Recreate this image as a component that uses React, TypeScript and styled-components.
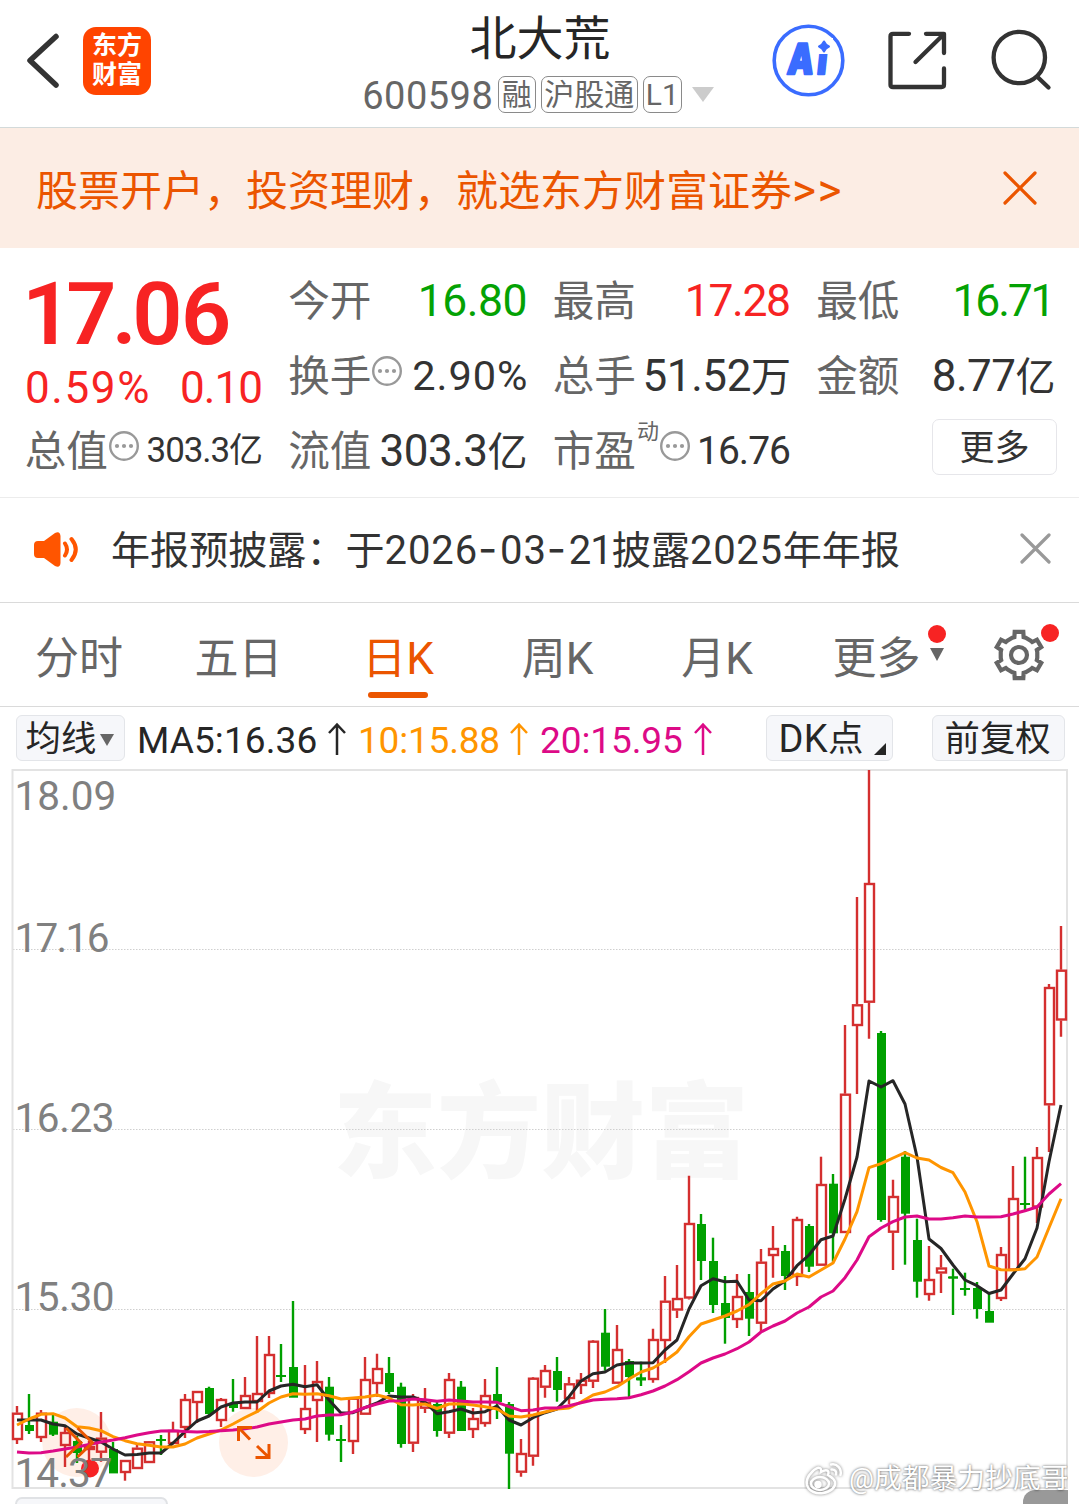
import React from 'react';
import styled, { createGlobalStyle } from 'styled-components';

const GlobalStyle = createGlobalStyle`
  * { box-sizing: border-box; }
  body {
    margin: 0;
    background: #fff;
    font-family: Roboto, "Noto Sans CJK SC", sans-serif;
    color: #333;
  }
`;

const C = {
  red: '#f72323',
  green: '#04a204',
  orange: '#eb5500',
  label: '#666',
  text: '#333',
  ink: '#262626',
};

const Screen = styled.div`
  width: 1079px;
  height: 1504px;
  overflow: hidden;
  position: relative;
  background: #fff;
  white-space: nowrap;
`;

const Txt = styled.span<{ $s: number; $c?: string; $ls?: number; $dy?: number }>`
  display: block;
  font-size: ${p => p.$s}px;
  line-height: 1.1;
  color: ${p => p.$c || C.text};
  letter-spacing: ${p => p.$ls || 0}px;
  margin-right: ${p => -(p.$ls || 0)}px;
  padding-top: ${p => p.$dy || 0}px;
`;

const Latin = styled.span<{ $s: number; $ls?: number }>`
  font-size: ${p => p.$s}px;
  letter-spacing: ${p => p.$ls || 0}px;
`;

/* ---------- header ---------- */
const Header = styled.header`
  height: 128px;
  border-bottom: 1px solid #d3dada;
  display: grid;
  grid-template-columns: 270px 1fr 310px;
`;
const HeaderLeft = styled.div`
  display: flex;
  align-items: center;
  height: 121px;
  padding-left: 24px;
  gap: 21px;
`;
const Logo = styled.div`
  width: 68px;
  height: 68px;
  border-radius: 13px;
  background: #ff4400;
  color: #fff;
  font-weight: 700;
  font-size: 25px;
  line-height: 29.5px;
  text-align: center;
  padding-top: 4px;
`;
const HeaderMid = styled.div`
  display: flex;
  flex-direction: column;
  align-items: center;
  padding-left: 40px;
`;
const Title = styled.div`
  font-size: 47px;
  line-height: 56px;
  color: ${C.ink};
  margin-top: 11px;
  margin-left: 1px;
`;
const SubTitle = styled.div`
  display: flex;
  align-items: center;
  height: 37px;
  margin-top: 9px;
  margin-right: 3px;
`;
const Tag = styled.span<{ $w: number }>`
  width: ${p => p.$w}px;
  height: 37px;
  border: 1px solid #8a8a8a;
  border-radius: 7px;
  font-size: 30px;
  line-height: 36px;
  color: ${C.label};
  display: flex;
  justify-content: center;
  margin-left: 5px;
`;
const TriDown = styled.i<{ $w: number; $h: number; $c: string; $ml?: number }>`
  width: 0;
  height: 0;
  margin-left: ${p => p.$ml || 0}px;
  border-left: ${p => p.$w / 2}px solid transparent;
  border-right: ${p => p.$w / 2}px solid transparent;
  border-top: ${p => p.$h}px solid ${p => p.$c};
`;
const HeaderRight = styled.div`
  display: flex;
  align-items: center;
  height: 121px;
`;

/* ---------- banner ---------- */
const Banner = styled.div`
  height: 120px;
  background: #fcede4;
  display: flex;
  align-items: center;
  justify-content: space-between;
  padding: 0 42px 0 36px;
`;

/* ---------- quote ---------- */
const Quote = styled.section`
  height: 250px;
  border-bottom: 1px solid #ececec;
  display: grid;
  grid-template-columns: 238px 239px 238px 239px;
  column-gap: 25.5px;
  padding: 15px 0 0 25px;
`;
const QCol = styled.div`
  display: flex;
  flex-direction: column;
`;
const Price = styled.div`
  height: 99px;
  line-height: 95px;
  padding-top: 3px;
  font-size: 88px;
  font-weight: 600;
  color: ${C.red};
  letter-spacing: -1.5px;
  margin-left: -3px;
`;
const Tight = styled.span<{ $ls: number }>`
  letter-spacing: ${p => p.$ls}px;
`;
const QRow = styled.div<{ $h?: number }>`
  height: ${p => p.$h || 75}px;
  display: flex;
  align-items: center;
  justify-content: space-between;
`;
const QLabel = styled.div`
  display: flex;
  align-items: center;
  font-size: 41.6px;
  line-height: 60px;
  margin-left: -0.3px;
  padding-top: 2px;
  color: ${C.label};
`;
const Sup = styled.span`
  font-size: 22px;
  line-height: 24px;
  margin: -40px 0 0 1px;
`;
const MoreBtn = styled.button`
  margin-left: auto;
  margin-right: -1.5px;
  margin-top: -7px;
  width: 125px;
  height: 56px;
  border: 1.5px solid #e6e6ea;
  border-radius: 7px;
  background: #fff;
  font: 400 35px/46px "Noto Sans CJK SC", sans-serif;
  color: ${C.text};
  padding: 0 0 4px;
`;

/* ---------- notice ---------- */
const Notice = styled.div`
  height: 105px;
  border-bottom: 1px solid #dadada;
  display: flex;
  align-items: center;
  padding: 0 28.5px 0 32px;
`;
const NoticeText = styled.div`
  flex: 1;
  margin-left: 31px;
  padding-top: 1px;
  font-size: 39.1px;
  line-height: 60px;
`;
const NoticeClose = styled.span`
  display: flex;
  margin-top: -3px;
`;
const Dash = styled.span`
  display: inline-block;
  width: 22px;
  padding-right: 3px;
  text-align: center;
  font-family: Inter, sans-serif;
  font-size: 42px;
  line-height: 40px;
`;

/* ---------- tabs ---------- */
const Tabs = styled.nav`
  height: 104px;
  border-bottom: 1px solid #dadada;
  display: flex;
`;
const Tab = styled.div<{ $on?: boolean }>`
  width: 159.5px;
  height: 103px;
  display: flex;
  flex-direction: column;
  align-items: center;
  padding-top: 24px;
  padding-right: 1.5px;
  font-size: 44px;
  line-height: 64px;
  color: ${p => (p.$on ? C.orange : C.label)};
  position: relative;
  &::after {
    content: "";
    width: 60px;
    height: 6px;
    border-radius: 3px;
    margin-top: 1px;
    background: ${p => (p.$on ? C.orange : 'transparent')};
  }
`;
const RedDot = styled.i<{ $x: number; $y: number }>`
  position: absolute;
  left: ${p => p.$x}px;
  top: ${p => p.$y}px;
  width: 18px;
  height: 18px;
  border-radius: 50%;
  background: ${C.red};
`;
const TabArrow = styled.span`
  position: absolute;
  left: 132px;
  top: 45px;
  display: flex;
`;
const GearBox = styled.div`
  position: relative;
  margin-left: 35px;
  padding-top: 24.5px;
`;

/* ---------- toolbar ---------- */
const Toolbar = styled.div`
  height: 62px;
  display: flex;
  align-items: flex-start;
  padding: 8px 14.5px 0 16px;
`;
const Pill = styled.div<{ $w: number; $pl: number; $ml?: string }>`
  width: ${p => p.$w}px;
  height: 46px;
  margin-left: ${p => p.$ml || 0};
  border: 1.5px solid #e3e5e9;
  border-radius: 6px;
  background: #f6f7fa;
  color: ${C.ink};
  font-size: 35.4px;
  line-height: 43px;
  display: flex;
  align-items: center;
  padding-left: ${p => p.$pl}px;
  padding-top: 3px;
`;
const MaItem = styled.div<{ $c: string; $w: number; $ml: number; $ls?: number }>`
  width: ${p => p.$w}px;
  height: 46px;
  margin-left: ${p => p.$ml}px;
  letter-spacing: ${p => p.$ls || 0}px;
  display: flex;
  align-items: center;
  justify-content: space-between;
  padding-top: 5px;
  color: ${p => p.$c};
  font-size: 37px;
  line-height: 41px;
`;
const Corner = styled.i`
  align-self: flex-end;
  margin: 0 0 5px 11px;
  border-left: 12px solid transparent;
  border-bottom: 12px solid ${C.ink};
`;

/* ---------- chart ---------- */
const ChartSvg = styled.svg`
  display: block;
`;
const BottomRow = styled.div`
  display: flex;
  justify-content: space-between;
  padding: 8px 11px 0 15px;
`;
const BottomPill = styled.div`
  width: 153px;
  height: 30px;
  border: 2px solid #e0e2e5;
  border-radius: 7px;
  background: #f6f7fa;
`;
const BottomTab = styled.div`
  width: 45px;
  height: 30px;
  margin-top: -7px;
  border-radius: 12px 0 0 0;
  background: #999;
`;
const Mark = styled.div`
  position: absolute;
  left: 804px;
  top: 1459px;
  width: 264px;
  height: 40px;
  overflow: hidden;
  display: flex;
  align-items: center;
  gap: 5px;
  color: #fff;
  font-size: 27.8px;
  line-height: 40px;
  text-shadow: 0 0 3px rgba(0, 0, 0, 0.5), 0 0 2px rgba(0, 0, 0, 0.3);
`;
const WeiboLogo = styled.svg`
  flex: none;
  filter: drop-shadow(0 0 1.5px rgba(0, 0, 0, 0.5));
`;
const InfoIcon = styled.svg`
  margin-top: -12px;
`;
const ArrowIcon = styled.svg`
  margin-top: -4px;
`;

const Info = () => (
  <InfoIcon width="32" height="32" viewBox="-16 -16 32 32">
    <circle r="13.8" fill="none" stroke="#999" strokeWidth="2.4" />
    {[-7, 0, 7].map(x => <circle key={x} cx={x} r="2.1" fill="#999" />)}
  </InfoIcon>
);

const Cross = ({ size, color }: { size: number; color: string }) => (
  <svg width={size} height={size} viewBox={`0 0 ${size} ${size}`}>
    <path d={`M2 2L${size - 2} ${size - 2}M${size - 2} 2L2 ${size - 2}`} stroke={color} strokeWidth="3.2" strokeLinecap="round" />
  </svg>
);

const UpArrow = () => (
  <ArrowIcon width="20" height="34" viewBox="0 0 20 34" fill="none" stroke="currentColor" strokeWidth="2.5">
    <path d="M10 33V3M2 11L10 2.5L18 11" />
  </ArrowIcon>
);

const Gear = () => {
  const pts: string[] = [];
  for (let k = 0; k < 6; k++) {
    const a = k * 60 - 90;
    [[-21, 18.5], [-14.5, 18.5], [-10.5, 23.6], [10.5, 23.6], [14.5, 18.5], [21, 18.5]].forEach(([d, r]) => {
      const t = ((a + d) * Math.PI) / 180;
      pts.push(`${(r * Math.cos(t)).toFixed(2)},${(r * Math.sin(t)).toFixed(2)}`);
    });
  }
  return (
    <svg width="54" height="54" viewBox="-27 -27 54 54" fill="none" stroke="#666" strokeWidth="4.2">
      <polygon points={pts.join(' ')} />
      <circle r="8" />
    </svg>
  );
};

// [high, bodyTop, bodyBottom, low, rising]
type Candle = [number, number, number, number, 0 | 1];
const candles: Candle[] = [
  [1406, 1412.7, 1440, 1444, 1], [1394, 1425, 1431, 1434, 0], [1410, 1412.7, 1438, 1442, 1], [1415, 1421.7, 1434.7, 1436, 0],
  [1427, 1432, 1446, 1467, 1], [1436, 1441, 1453, 1463, 0], [1441, 1446, 1450, 1463, 1], [1412, 1437.7, 1452.7, 1461.7, 1],
  [1442, 1449, 1473.4, 1473, 0], [1460, 1460, 1473, 1480.7, 1], [1445, 1447.7, 1469, 1469, 1], [1441, 1441.3, 1463, 1463, 1],
  [1435, 1439, 1441, 1455, 0], [1421.7, 1430, 1444, 1444, 1], [1394, 1399, 1428, 1438, 1], [1391, 1391, 1403, 1423, 1],
  [1386.7, 1388, 1414, 1416, 0], [1398, 1399, 1421, 1427, 1], [1379, 1404, 1408, 1411.7, 0], [1377, 1395, 1409, 1409, 1],
  [1336, 1393, 1402, 1413, 1], [1336, 1354, 1394, 1398, 1], [1344, 1375, 1377, 1382, 0], [1301, 1367, 1397.7, 1397, 0],
  [1365, 1408, 1430, 1434, 1], [1361, 1381, 1401, 1442, 1], [1377, 1386.7, 1434.7, 1440.7, 0], [1425, 1439, 1441, 1462, 0],
  [1397, 1397.7, 1442, 1454, 1], [1357, 1379, 1414.7, 1414, 1], [1353.7, 1368, 1384, 1397, 1], [1357, 1373, 1392, 1394, 0],
  [1382.7, 1386.7, 1444, 1447.7, 0], [1394, 1397, 1443.7, 1452, 1], [1388, 1402, 1408.7, 1413, 1], [1402, 1404, 1431, 1436.7, 0],
  [1373, 1379, 1433.7, 1438, 1], [1381, 1386.7, 1431, 1431, 0], [1408, 1418, 1430, 1438, 1], [1379, 1395, 1424, 1426.7, 1],
  [1367, 1394, 1402, 1419, 0], [1402, 1404, 1453.7, 1489, 0], [1439, 1453, 1472.7, 1476.7, 1], [1377, 1377.7, 1456.7, 1465.7, 1],
  [1365, 1370, 1387.7, 1397.7, 1], [1357, 1371, 1390, 1401.7, 0], [1377, 1383.3, 1399, 1404, 1], [1373, 1379.7, 1386, 1394, 1],
  [1340, 1340.7, 1381.7, 1388, 1], [1309, 1332.7, 1366.7, 1370.7, 0], [1325, 1349, 1383.7, 1383, 1], [1359, 1361, 1377, 1399, 0],
  [1361.7, 1377.5, 1380.3, 1386, 0], [1328.7, 1339, 1380, 1382.7, 1], [1276, 1300.7, 1341, 1363, 1], [1265, 1298, 1310.5, 1318, 1],
  [1175.7, 1223, 1298.5, 1299.5, 1], [1214, 1224, 1261, 1280, 0], [1237.7, 1261, 1305, 1313, 0], [1276, 1303, 1318, 1343.7, 0],
  [1274, 1296, 1320, 1328, 1], [1274, 1292, 1318.7, 1336, 0], [1249, 1261.7, 1323.7, 1331, 1], [1226, 1248, 1256, 1277.7, 1],
  [1245, 1251, 1276, 1290, 0], [1216.7, 1219, 1277, 1286, 1], [1224, 1226, 1266.7, 1272, 0], [1156.7, 1184, 1265.7, 1265, 1],
  [1174, 1183.7, 1233.3, 1261.7, 0], [1025, 1093.7, 1233, 1233, 1], [897, 1004.3, 1026, 1094, 1], [770, 883, 1002.7, 1038.7, 1],
  [1031, 1033, 1220, 1221.7, 0], [1179.7, 1196, 1232.7, 1270, 1], [1151, 1156.7, 1213.7, 1264.7, 0], [1218.7, 1240, 1281.7, 1297.7, 0],
  [1246, 1279, 1295, 1300.7, 1], [1255, 1267.5, 1273.5, 1293, 1], [1268.7, 1276.5, 1278.5, 1315, 0], [1272.7, 1288, 1290, 1295.7, 0],
  [1282, 1288, 1309, 1318.7, 0], [1294, 1311, 1322.7, 1322, 0], [1247, 1254, 1299, 1301, 1], [1166, 1198, 1270.5, 1270, 1],
  [1156.7, 1203, 1205, 1210.7, 0], [1147, 1157, 1207.5, 1223, 1], [984, 987, 1105.3, 1152, 1], [926, 969.7, 1020.5, 1036.7, 1],
];

const ma5 = [1420, 1420, 1420, 1424, 1425.7, 1434, 1438, 1442, 1449, 1455, 1454.5, 1453, 1453, 1443, 1431.7, 1421, 1416, 1407, 1403, 1402, 1402, 1391, 1386, 1384.3, 1386.7, 1384.7, 1400, 1413, 1412.7, 1407.7, 1403, 1396, 1397, 1397, 1402, 1413.7, 1411.7, 1409, 1413, 1411.7, 1406, 1420, 1425, 1417.7, 1412.7, 1409, 1396.7, 1381, 1373.7, 1372, 1365, 1363, 1363, 1362.7, 1350, 1340, 1309, 1285.7, 1278.7, 1281.7, 1281.3, 1300, 1300.7, 1289, 1281, 1265.7, 1255, 1239.7, 1236, 1199, 1157, 1081, 1087, 1080.7, 1104, 1157, 1239, 1248.5, 1265, 1280, 1285.7, 1293.5, 1290, 1274, 1258.7, 1228, 1161.7, 1105];
const ma10 = [1425, 1419, 1414.3, 1413.7, 1418, 1426.7, 1428, 1430.7, 1436.7, 1440.7, 1443.7, 1445.3, 1447, 1447, 1444, 1438, 1434, 1430, 1424, 1417.5, 1411.7, 1403, 1397, 1393.7, 1394.3, 1393.7, 1395.7, 1399, 1398, 1397, 1395, 1398, 1404.7, 1405, 1404, 1408.5, 1404, 1403.7, 1405, 1406.7, 1409, 1416, 1417, 1415, 1412, 1409, 1408, 1402, 1395, 1392, 1386.7, 1379, 1372, 1368, 1361, 1352, 1336.7, 1324, 1320, 1316, 1311, 1304.7, 1293.7, 1284, 1281, 1274, 1277, 1270, 1263, 1239, 1211.7, 1167.7, 1163.7, 1158, 1152.7, 1158, 1160, 1167.5, 1172.7, 1192, 1221.7, 1266, 1269.7, 1270, 1268.7, 1257, 1227.7, 1198.7];
const ma20 = [1452, 1453, 1452.7, 1451, 1449, 1447, 1444.5, 1442, 1440, 1437.7, 1435, 1432.7, 1431, 1430.7, 1431.5, 1432, 1431.5, 1430.7, 1430, 1428.7, 1427, 1424, 1422, 1420, 1419, 1416, 1415, 1414.7, 1412, 1407.5, 1404, 1401, 1400.7, 1399, 1399.7, 1401.3, 1400, 1401, 1402, 1402, 1402.3, 1406.7, 1410.7, 1410, 1408, 1408, 1405.7, 1402.7, 1400, 1399.3, 1398.7, 1397.7, 1394.7, 1391, 1386, 1379.7, 1371.7, 1363, 1358, 1354, 1348.7, 1342, 1332, 1326, 1321, 1313, 1307, 1297, 1291, 1277.7, 1260, 1236.7, 1228, 1221.7, 1217, 1216, 1219, 1219, 1217.7, 1216, 1217, 1217, 1216.7, 1214, 1210.7, 1207, 1194, 1183.7];

// [label, baseline, letter spacing]
const axis: [string, number, number][] = [
  ['18.09', 809.5, 0],
  ['17.16', 951.5, -1.7],
  ['16.23', 1131.5, -0.4],
  ['15.30', 1310.5, -0.4],
  ['14.37', 1486.5, -0.9],
];

const px = (i: number) => 17 + i * 12;
const toPoints = (ys: number[]) => ys.map((y, i) => `${px(i)},${y}`).join(' ');
const UP = '#d42f2f';
const DOWN = '#00a000';

const Chart = () => (
  <ChartSvg width="1079" height="720" viewBox="0 769 1079 720">
    <text x="333" y="1170" fontSize="104" fontWeight="900" fill="#f7f7f7" fontFamily="Noto Sans CJK SC, sans-serif">东方财富</text>
    {[949.5, 1129.5, 1309.5].map(y => (
      <line key={y} x1="13" x2="1067" y1={y} y2={y} stroke="#cfcfcf" strokeWidth="1" strokeDasharray="1.5 1.5" />
    ))}
    <path d="M12.5 1488V770H1067V1488Z" fill="none" stroke="#e3e3e3" strokeWidth="2" />
    <circle cx="76.7" cy="1442.5" r="34.5" fill="#ffefe7" />
    <circle cx="253.5" cy="1442.5" r="34.5" fill="#ffefe7" />
    {candles.map(([hi, top, bot, lo, up], i) => {
      const x = px(i);
      return up ? (
        <g key={i} fill="none" stroke={UP} strokeWidth="2.4">
          <path d={`M${x} ${hi}V${top}M${x} ${bot}V${Math.max(lo, bot)}`} />
          <rect x={x - 4} y={top + 1} width="9" height={Math.max(bot - top - 2, 1)} />
        </g>
      ) : (
        <g key={i} fill={DOWN}>
          <rect x={x - 1.2} y={hi} width="2.4" height={lo - hi} />
          <rect x={x - 4} y={top} width="9" height={bot - top} />
          {bot - top < 3 && <rect x={x - 5} y={top} width="10" height={bot - top} />}
        </g>
      );
    })}
    <g fill="none" strokeWidth="3" strokeLinejoin="round">
      <polyline points={toPoints(ma5)} stroke="#262626" />
      <polyline points={toPoints(ma10)} stroke="#ff9500" />
      <polyline points={toPoints(ma20)} stroke="#dd0a87" />
    </g>
    <g fill="none" stroke="#eb5500" strokeWidth="3">
      <path d="M66 1428L81 1442.7L66 1457M77.5 1428L92.5 1442.7L77.5 1457" />
      <path d="M238.5 1441V1427.5H252M239 1428L250 1439.5M255.5 1457.5H269V1444M269 1457.5L257 1446" />
    </g>
    <circle cx="90" cy="1468.5" r="9" fill="#f72323" />
    {axis.map(([label, y, ls]) => (
      <text key={label} x="14.5" y={y} fontSize="40.5" fill="#808080" letterSpacing={ls}>{label}</text>
    ))}
  </ChartSvg>
);

export default function App() {
  return (
    <Screen>
      <GlobalStyle />
      <Header>
        <HeaderLeft>
          <svg width="38" height="60" viewBox="0 0 38 60" fill="none" stroke="#333" strokeWidth="5.5" strokeLinecap="round" strokeLinejoin="round">
            <path d="M32 5.5L6 29.5L32 54" />
          </svg>
          <Logo>东方<br />财富</Logo>
        </HeaderLeft>
        <HeaderMid>
          <Title>北大荒</Title>
          <SubTitle>
            <Txt $s={38} $c={C.label} $ls={0.5} $dy={4}>600598</Txt>
            <Tag $w={38}>融</Tag>
            <Tag $w={97}>沪股通</Tag>
            <Tag $w={39}>L1</Tag>
            <TriDown $w={22} $h={15} $c="#ccc" $ml={10} />
          </SubTitle>
        </HeaderMid>
        <HeaderRight>
          <svg width="310" height="121" viewBox="769 0 310 121" fill="none" stroke="#333" strokeWidth="4.3" strokeLinecap="round" strokeLinejoin="round">
            <circle cx="808.5" cy="60.5" r="34.3" stroke="#3a6cff" strokeWidth="3.6" />
            <text transform="translate(786.5 74) skewX(-6) scale(0.78 1)" x="0 38" y="0" fontSize="42" fontWeight="900" fill="#3a6cff" stroke="#3a6cff" strokeWidth="2.4" fontFamily="Inter, sans-serif">Ai</text>
            <rect x="816" y="38" width="17" height="16" fill="#fff" stroke="none" />
            <path d="M824 41.5Q825.5 45 829 46.5Q825.5 48 824 51.5Q822.5 48 819 46.5Q822.5 45 824 41.5Z" fill="#3a6cff" stroke="#3a6cff" strokeWidth="2" />
            <path d="M909 33.8H893Q890.5 33.8 890.5 36.3V85Q890.5 87 893 87H941.5Q944 87 944 84.5V68.5M926 33.8H944V53M943 35L915.5 62" />
            <circle cx="1019.3" cy="57.5" r="25.7" />
            <path d="M1037.5 77L1048.5 87.5" />
          </svg>
        </HeaderRight>
      </Header>

      <Banner>
        <Txt $s={42} $c={C.orange} $dy={4}>股票开户，投资理财，就选东方财富证券<Latin $s={46} $ls={1.5}>&gt;&gt;</Latin></Txt>
        <Cross size={34} color={C.orange} />
      </Banner>

      <Quote>
        <QCol>
          <Price><Tight $ls={-6}>1</Tight><Tight $ls={-4.7}>7.</Tight>06</Price>
          <QRow $h={51}>
            <Txt $s={44} $c={C.red} $ls={1.6} $dy={1}>0.59%</Txt>
            <Txt $s={44} $c={C.red} $ls={-0.9} $dy={1}>0.10</Txt>
          </QRow>
          <QRow>
            <QLabel>总值<Info /></QLabel>
            <Txt $s={34} $dy={1}><Latin $s={35} $ls={-1.1}>303.3</Latin>亿</Txt>
          </QRow>
        </QCol>
        <QCol>
          <QRow><QLabel>今开</QLabel><Txt $s={44.5} $c={C.green} $ls={-0.5} $dy={1}>16.80</Txt></QRow>
          <QRow><QLabel>换手<Info /></QLabel><Txt $s={41.5} $ls={1}>2.90%</Txt></QRow>
          <QRow><QLabel>流值</QLabel><Txt $s={40} $dy={1}><Latin $s={44} $ls={-0.5}>303.3</Latin>亿</Txt></QRow>
        </QCol>
        <QCol>
          <QRow><QLabel>最高</QLabel><Txt $s={44.5} $c={C.red} $ls={-1.4} $dy={1}>17.28</Txt></QRow>
          <QRow><QLabel>总手</QLabel><Txt $s={40} $dy={1}><Latin $s={44} $ls={-0.4}>51.52</Latin>万</Txt></QRow>
          <QRow><QLabel>市盈<Sup>动</Sup><Info /></QLabel><Txt $s={39} $ls={-1} $dy={1}>16.76</Txt></QRow>
        </QCol>
        <QCol>
          <QRow><QLabel>最低</QLabel><Txt $s={44.5} $c={C.green} $ls={-2.2} $dy={1}>16.71</Txt></QRow>
          <QRow><QLabel>金额</QLabel><Txt $s={40} $dy={1}><Latin $s={44} $ls={-0.5}>8.77</Latin>亿</Txt></QRow>
          <QRow><MoreBtn>更多</MoreBtn></QRow>
        </QCol>
      </Quote>

      <Notice>
        <svg width="48" height="40" viewBox="32 530 48 40" fill="none">
          <path d="M38 541H44L55 533Q60 530.5 60.5 536V563Q60 568.5 55 566L44 558H38Q34 558 34 554V545Q34 541 38 541Z" fill="#ff5500" />
          <path d="M65 543.5Q69 549.5 65 555.5M71.5 539Q80 549.5 71.5 560" stroke="#ff5500" strokeWidth="4" strokeLinecap="round" />
        </svg>
        <NoticeText>
          年报预披露：于<Latin $s={40} $ls={0.9}>2026</Latin><Dash>-</Dash><Latin $s={40} $ls={0.9}>03</Latin><Dash>-</Dash><Latin $s={40} $ls={-1}>21</Latin>披露<Latin $s={40} $ls={0.7}>2025</Latin>年年报
        </NoticeText>
        <NoticeClose><Cross size={31} color="#999" /></NoticeClose>
      </Notice>

      <Tabs>
        <Tab>分时</Tab>
        <Tab>五日</Tab>
        <Tab $on>日K</Tab>
        <Tab>周K</Tab>
        <Tab>月K</Tab>
        <Tab>
          更多
          <RedDot $x={130} $y={22} />
          <TabArrow><TriDown $w={15} $h={13} $c="#666" /></TabArrow>
        </Tab>
        <GearBox>
          <Gear />
          <RedDot $x={49} $y={21} />
        </GearBox>
      </Tabs>

      <Toolbar>
        <Pill $w={109} $pl={8.5}>均线<TriDown $w={15} $h={12} $c="#666" $ml={4} /></Pill>
        <MaItem $c={C.ink} $w={210} $ml={12} $ls={0.1}>MA5:16.36<UpArrow /></MaItem>
        <MaItem $c="#ff9500" $w={171} $ml={11} $ls={-0.2}>10:15.88<UpArrow /></MaItem>
        <MaItem $c="#dd0a87" $w={173} $ml={11} $ls={-0.1}>20:15.95<UpArrow /></MaItem>
        <Pill $w={127} $pl={12} $ml="auto"><Latin $s={38} $ls={0.3}>DK</Latin>点<Corner /></Pill>
        <Pill $w={133} $pl={12} $ml="39px">前复权</Pill>
      </Toolbar>

      <Chart />

      <BottomRow>
        <BottomPill />
        <BottomTab />
      </BottomRow>

      <Mark>
        <WeiboLogo width="40" height="36" viewBox="0 0 40 36" fill="none" stroke="#fff" strokeWidth="2.5" strokeLinecap="round">
          <path d="M24 14C26 9 22 8 17 11C18 6 14 5 8 11C3 16 2 20 3 24C5 31 13 33 19 32C27 31 32 26 31 21C30 17 27 16 24 14Z" />
          <ellipse cx="16" cy="22.5" rx="9" ry="6.5" />
          <circle cx="14" cy="23.5" r="2.5" fill="#fff" />
          <path d="M27 3.5C33 2 38 8 36.5 14M27.5 8.5C31 8 33 11 32 13.5" />
        </WeiboLogo>
        @成都暴力抄底哥
      </Mark>
    </Screen>
  );
}
